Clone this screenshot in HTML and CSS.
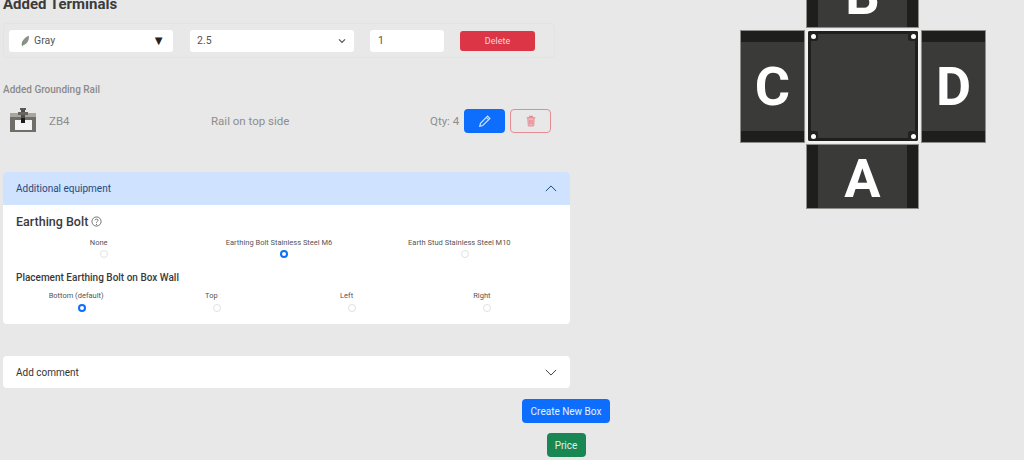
FILE: index.html
```html
<!DOCTYPE html>
<html lang="en">
<head>
<meta charset="utf-8">
<title>Box configurator</title>
<link rel="stylesheet" href="styles.css">
</head>
<body>
<div class="page">
  <main class="main">
    <h2 class="title">Added Terminals</h2>
    <div class="terminal-row">
      <div class="field field-color">
        <svg class="leaf" viewBox="0 0 10 14" width="9" height="12"><path d="M1 13 C0 8 3 3 9 1 C9.500 6 7 11 2 12 Z" fill="#8f8f8c"/><path d="M1 13 C0 10 1 8 3 7 C3 9 3 11 2 12 Z" fill="#6a9a76"/></svg>
        <span class="field-text">Gray</span>
        <span class="caret">▼</span>
      </div>
      <div class="field field-size">
        <span class="field-text">2.5</span>
        <svg class="chev-small" viewBox="0 0 12 8" width="8" height="6"><path d="M1.500 1.500 6 6 10.500 1.500" fill="none" stroke="#555" stroke-width="1.800"/></svg>
      </div>
      <div class="field field-qty"><span class="field-text">1</span></div>
      <button class="btn btn-delete">Delete</button>
    </div>

    <h3 class="rail-title">Added Grounding Rail</h3>
    <div class="rail-row">
      <svg class="rail-icon" viewBox="0 0 26 26" width="26" height="26">
        <rect x="0" y="5" width="26" height="19" fill="#6f6e69"/>
        <rect x="0" y="5" width="26" height="4" fill="#a8a69f"/>
        <rect x="5" y="12" width="17" height="10" fill="#f4f4f4"/>
        <rect x="10" y="0" width="6" height="2" fill="#5a5955"/>
        <rect x="11" y="2" width="4" height="8" fill="#4e4d49"/>
        <rect x="11" y="10" width="4" height="5" fill="#1d1d1b"/>
        <rect x="8" y="4" width="10" height="3" fill="#66655f"/>
      </svg>
      <span class="rail-code">ZB4</span>
      <span class="rail-side">Rail on top side</span>
      <span class="rail-qty">Qty: 4</span>
      <button class="btn btn-edit" aria-label="Edit">
        <svg viewBox="0 0 16 16" width="12" height="12"><path d="M11.500 1.500 14.500 4.500 5 14 1 15 2 11 Z M9.800 3.200 12.800 6.200" fill="none" stroke="#cfe2ff" stroke-width="1.600"/></svg>
      </button>
      <button class="btn btn-trash" aria-label="Remove">
        <svg viewBox="0 0 14 16" width="10" height="12"><path d="M1 3.500H13M5 3.500V1.500H9V3.500" fill="none" stroke="#e78b93" stroke-width="1.500"/><path d="M2.500 3.500 3.200 15H10.800L11.500 3.500Z" fill="#f0b9bd" stroke="#e78b93" stroke-width="1.300"/><path d="M5.500 6.500V12.500M8.500 6.500V12.500" stroke="#e06a75" stroke-width="1.100"/></svg>
      </button>
    </div>

    <section class="panel panel-open">
      <header class="panel-head head-open">
        <span>Additional equipment</span>
        <svg viewBox="0 0 14 8" width="12" height="7"><path d="M1 7 7 1 13 7" fill="none" stroke="#0c3f7d" stroke-width="1.100"/></svg>
      </header>
      <div class="panel-body">
        <h4 class="bolt-title">Earthing Bolt
          <svg class="help" viewBox="0 0 12 12" width="11" height="11"><circle cx="6" cy="6" r="5" fill="none" stroke="#444" stroke-width=".8"/><path d="M4.300 4.700C4.300 2.900 7.700 2.900 7.700 4.700 7.700 6 6 5.800 6 7.400" fill="none" stroke="#444" stroke-width=".8"/><circle cx="6" cy="9" r=".6" fill="#444"/></svg>
        </h4>
        <div class="options options-3">
          <div class="option"><span>None</span><i class="radio"></i></div>
          <div class="option"><span>Earthing Bolt Stainless Steel M6</span><i class="radio radio-on"></i></div>
          <div class="option"><span>Earth Stud Stainless Steel M10</span><i class="radio"></i></div>
        </div>
        <h5 class="place-title">Placement Earthing Bolt on Box Wall</h5>
        <div class="options options-4">
          <div class="option"><span>Bottom (default)</span><i class="radio radio-on"></i></div>
          <div class="option"><span>Top</span><i class="radio"></i></div>
          <div class="option"><span>Left</span><i class="radio"></i></div>
          <div class="option"><span>Right</span><i class="radio"></i></div>
        </div>
      </div>
    </section>

    <section class="panel panel-closed">
      <header class="panel-head head-closed">
        <span>Add comment</span>
        <svg viewBox="0 0 14 8" width="12" height="7"><path d="M1 1 7 7 13 1" fill="none" stroke="#333" stroke-width="1.100"/></svg>
      </header>
    </section>

    <div class="actions">
      <button class="btn btn-create">Create New Box</button>
      <button class="btn btn-price">Price</button>
    </div>
  </main>

  <div class="diagram">
    <div class="side side-v side-b"><b>B</b></div>
    <div class="side side-h side-c"><b>C</b></div>
    <div class="center">
      <i class="corner c1"></i><i class="corner c2"></i><i class="corner c3"></i><i class="corner c4"></i>
    </div>
    <div class="side side-h side-d"><b>D</b></div>
    <div class="side side-v side-a"><b>A</b></div>
  </div>
</div>
</body>
</html>
```
FILE: styles.css
```css
* { box-sizing: border-box; }
html, body { margin: 0; height: 460px; overflow: hidden; }
body { background: #e8e8e8; font-family: Roboto, "Liberation Sans", sans-serif; color: #212529; }
.page { position: relative; width: 1024px; height: 460px; overflow: hidden; }
.main { width: 571px; padding-left: 3px; display: flex; flex-direction: column; }

.title { margin: -5px 0 0; height: 28px; font-size: 15px; line-height: 19px; font-weight: 700; color: #3b3b3b; }

.terminal-row { width: 552px; height: 35px; border: 1px solid #e3e3e3; border-radius: 4px; display: flex; align-items: center; padding-left: 5px; }
.field { height: 22px; background: #fff; border-radius: 3px; display: flex; align-items: center; font-size: 10.500px; color: #555; }
.field-text { line-height: 22px; }
.field-color { width: 164px; padding-left: 12px; }
.leaf { margin-right: 4px; }
.caret { margin-left: auto; margin-right: 8px; font-size: 13px; color: #222; }
.field-size { width: 164px; margin-left: 17px; padding-left: 7px; justify-content: space-between; padding-right: 8px; }
.field-qty { width: 74px; margin-left: 16px; padding-left: 8px; }
.btn { border: 1px solid transparent; border-radius: 4px; font-family: Roboto, sans-serif; color: #fff; padding: 0; display: flex; align-items: center; justify-content: center; }
.btn-delete { width: 75px; height: 20px; margin-left: 16px; background: #dc3545; font-size: 9px; color: #f6d5d8; border-radius: 3px; }

.rail-title { margin: 26px 0 0; font-size: 10px; line-height: 12px; font-weight: 500; color: #8b8b8b; height: 12px; }
.rail-row { height: 26px; margin-top: 12px; display: flex; align-items: center; position: relative; font-size: 11.500px; color: #8d8d8d; padding-left: 7px; }
.rail-icon { flex: none; }
.rail-code { margin-left: 13px; width: 162px; }
.rail-side { width: 219px; }
.rail-qty { width: 34px; }
.btn-edit { width: 41px; height: 24px; background: #0d6efd; border-radius: 4px; }
.btn-trash { width: 41px; height: 24px; margin-left: 5px; background: transparent; border-color: #e78b93; border-radius: 4px; }

.panel { width: 567px; background: #fff; border-radius: 4px; overflow: hidden; font-family: Roboto, sans-serif; }
.panel-open { margin-top: 38px; height: 152px; }
.panel-closed { margin-top: 32px; height: 32px; }
.panel-head { height: 33px; display: flex; align-items: center; justify-content: space-between; padding: 0 13px; font-size: 10px; }
.head-open { background: #cfe2ff; color: #1f4a7d; }
.head-closed { height: 32px; color: #333; }
.panel-body { padding: 0 13px; }
.bolt-title { margin: 8px 0 0; height: 18px; font-size: 12.500px; line-height: 18px; font-weight: 500; color: #3a3a3a; display: flex; gap: 3px; align-items: flex-start; }
.help { margin-top: 3px; }
.options { display: grid; text-align: center; margin-left: -2px; margin-right: 2px; }
.options-3 { grid-template-columns: repeat(3, 1fr); margin-top: 7px; }
.options-3 .radio { margin-top: 2px; }
.options-4 { grid-template-columns: repeat(4, 1fr); margin-top: 7px; }
.option { display: flex; flex-direction: column; align-items: center; font-size: 7.500px; line-height: 10px; color: #555; }
.option span { margin-right: 11px; white-space: nowrap; }
.radio { width: 8px; height: 8px; margin-top: 3px; border-radius: 50%; border: 1px solid #e1e1e1; background: #fff; }
.radio-on { border: 2px solid #0d6efd; background: #fff; }
.place-title { margin: 13px 0 0; font-size: 10px; line-height: 13px; font-weight: 500; color: #3a3a3a; height: 13px; }

.actions { width: 88px; margin-left: 519px; margin-top: 11px; display: flex; flex-direction: column; align-items: center; gap: 10px; }
.btn-create { width: 88px; height: 24px; background: #0d6efd; font-size: 10px; color: #e6f0ff; }
.btn-price { width: 39px; height: 24px; background: #198754; font-size: 10px; color: #e0efe8; }

.diagram { position: absolute; left: 740px; top: -37px; width: 246px; height: 246px; }
.side { position: absolute; border: 1px solid #8d8d8a; display: flex; align-items: center; justify-content: center; color: #fff; font-family: Roboto, sans-serif; font-size: 54px; }
.side b { font-weight: 700; line-height: 1; }
.side-v { width: 113px; height: 65px; left: 66px; background: linear-gradient(to right, #1e1e1c 11px, #3a3a39 11px, #3a3a39 100px, #1e1e1c 100px); }
.side-h { width: 65px; height: 113px; top: 67px; background: linear-gradient(to bottom, #1e1e1c 11px, #3a3a39 11px, #3a3a39 100px, #1e1e1c 100px); }
.side-b { top: 0; }
.side-a { top: 181px; padding-top: 4px; }
.side-c { left: 0; }
.side-d { left: 181px; }
.center { position: absolute; left: 66px; top: 66px; width: 114px; height: 114px; background: #3a3a39; border: 2px solid #f2f2f2; border-radius: 4px; box-shadow: inset 0 0 0 3px #1f1f1d; }
.corner { position: absolute; width: 10px; height: 10px; background: #222220; }
.corner::after { content: ""; position: absolute; left: 2.500px; top: 2.500px; width: 5px; height: 5px; border-radius: 50%; background: #fff; }
.c1 { left: 0; top: 0; border-radius: 2px 0 2px 0; }
.c2 { right: 0; top: 0; border-radius: 0 2px 0 2px; }
.c3 { left: 0; bottom: 0; border-radius: 0 2px 0 2px; }
.c4 { right: 0; bottom: 0; border-radius: 2px 0 2px 0; }
```
